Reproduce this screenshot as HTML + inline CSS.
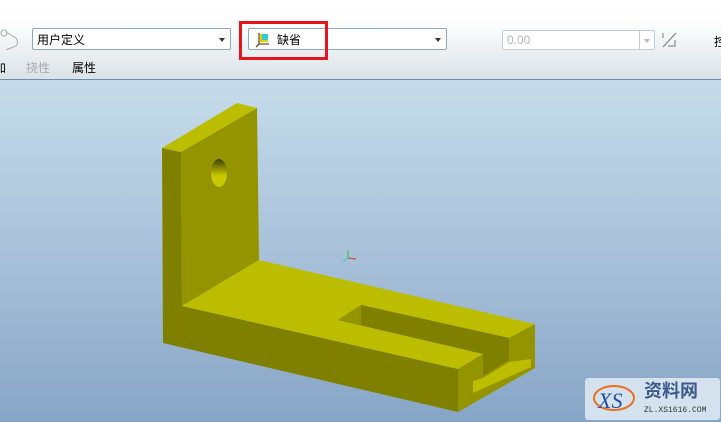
<!DOCTYPE html>
<html><head><meta charset="utf-8"><style>
body{margin:0;width:721px;height:422px;overflow:hidden;position:relative;font-family:"Liberation Sans","Noto Sans CJK SC",sans-serif;}
#tb{position:absolute;left:0;top:0;width:721px;height:79px;background:linear-gradient(#fff 0,#fdfdfd 25px,#e9eef1 55px,#dce3e8 78px);border-bottom:1px solid #6f8faa;}
#vp{position:absolute;left:0;top:80px;width:721px;height:342px;background:linear-gradient(#c6dcea,#a3bcd6 60%,#86a5c6);}
.cb{position:absolute;height:22px;border:1px solid #8ea8bf;border-radius:2px;background:#fff;font-size:12px;line-height:22px;box-sizing:border-box;}
.ar{position:absolute;right:5px;top:9px;width:0;height:0;border-left:3px solid transparent;border-right:3px solid transparent;border-top:4px solid #333;}
.t{position:absolute;font-size:12px;top:59px;}
</style></head><body>
<div id="tb">
<svg style="position:absolute;left:0;top:28px" width="24" height="24"><circle cx="4" cy="5" r="3" fill="none" stroke="#aaa"/><path d="M6 4 L16 10 Q19 14 16 18 L6 22" fill="none" stroke="#aaa"/></svg>
<div class="cb" style="left:32px;top:28px;width:199px;"><span style="padding-left:4px">用户定义</span><div class="ar"></div></div>
<div class="cb" style="left:248px;top:28px;width:199px;">
<svg style="position:absolute;left:6px;top:3px" width="16" height="16"><rect x="5" y="2" width="8" height="8" fill="#d8d800"/><rect x="7" y="2" width="6" height="6" fill="#30c8e0"/><path d="M4 1V12H14M4 12L1 15" stroke="#7a4a10" stroke-width="1.3" fill="none"/></svg>
<span style="position:absolute;left:28px;">缺省</span><div class="ar"></div></div>
<div style="position:absolute;left:239px;top:21px;width:89px;height:39px;border:3px solid #e8141c;box-sizing:border-box;"></div>
<div class="cb" style="left:502px;top:30px;width:153px;height:20px;line-height:19px;color:#b0b8c0;border-color:#c4ccd4;"><span style="padding-left:4px">0.00</span><div style="position:absolute;right:0;top:0;width:14px;height:18px;border-left:1px solid #c4ccd4"></div><div class="ar" style="border-top-color:#bbb;right:4px;top:8px"></div></div>
<svg style="position:absolute;left:660px;top:30px" width="20" height="20"><path d="M3 17L16 3M3 3L3 8M8 16L15 16L15 10" stroke="#777" fill="none"/></svg>
<div class="t" style="left:714px;top:33px">控</div>
<div class="t" style="left:-6px;">加</div>
<div class="t" style="left:26px;color:#a6abb0">挠性</div>
<div class="t" style="left:72px;">属性</div>
</div>
<div id="vp"></div>
<svg style="position:absolute;left:0;top:0" width="721" height="422">
<defs><linearGradient id="h" x1="0" y1="0" x2="0" y2="1"><stop offset="0" stop-color="#404000"/><stop offset="0.6" stop-color="#c8c800"/></linearGradient></defs>
<polygon points="162,148 181,152 182,306 458,369 458,412 163,343" fill="#808000"/>
<polygon points="181,152 257,108 259,260 182,306" fill="#949400"/>
<polygon points="162,148 237,103 257,108 181,152" fill="#bdbd00"/>
<polygon points="182,306 259,260 535,324 458,369" fill="#bdbd00"/>
<polygon points="458,369 483,354 509,338 535,324 535,368 458,412" fill="#949400"/>
<polygon points="338,320 361,305 509,338 483,354" fill="#808000"/>
<polygon points="338,320 361,305 361,325" fill="#949400"/>
<polygon points="361,325 509,358 509,338 361,305" fill="#808000"/>
<polygon points="473,393 531,367 531,359 509,362 483,378 473,381" fill="#bdbd00"/>
<polygon points="483,354 509,338 509,360 483,376" fill="#808000"/>
<ellipse cx="219" cy="173" rx="8" ry="14" fill="url(#h)"/>
<path d="M348 258V250M348 258L356 259" stroke="#2c2" fill="none"/><path d="M348 258L356 259" stroke="#e33"/><path d="M348 258L343 261" stroke="#2cc"/>
<rect x="585" y="378" width="135" height="42" rx="3" fill="#dde8f2" opacity="0.9"/>
<ellipse cx="614" cy="398" rx="20" ry="12" fill="none" stroke="#e87020" stroke-width="2"/>
<text x="598" y="408" font-family="Liberation Serif" font-style="italic" font-size="22" fill="#2050a0">XS</text>
<text x="644" y="397" font-size="18" font-weight="bold" fill="#3a5a8a" font-family="Noto Sans CJK SC,sans-serif">资料网</text>
<text x="644" y="412" font-size="8" fill="#333" font-family="Liberation Mono">ZL.XS1616.COM</text>
</svg>
</body></html>
